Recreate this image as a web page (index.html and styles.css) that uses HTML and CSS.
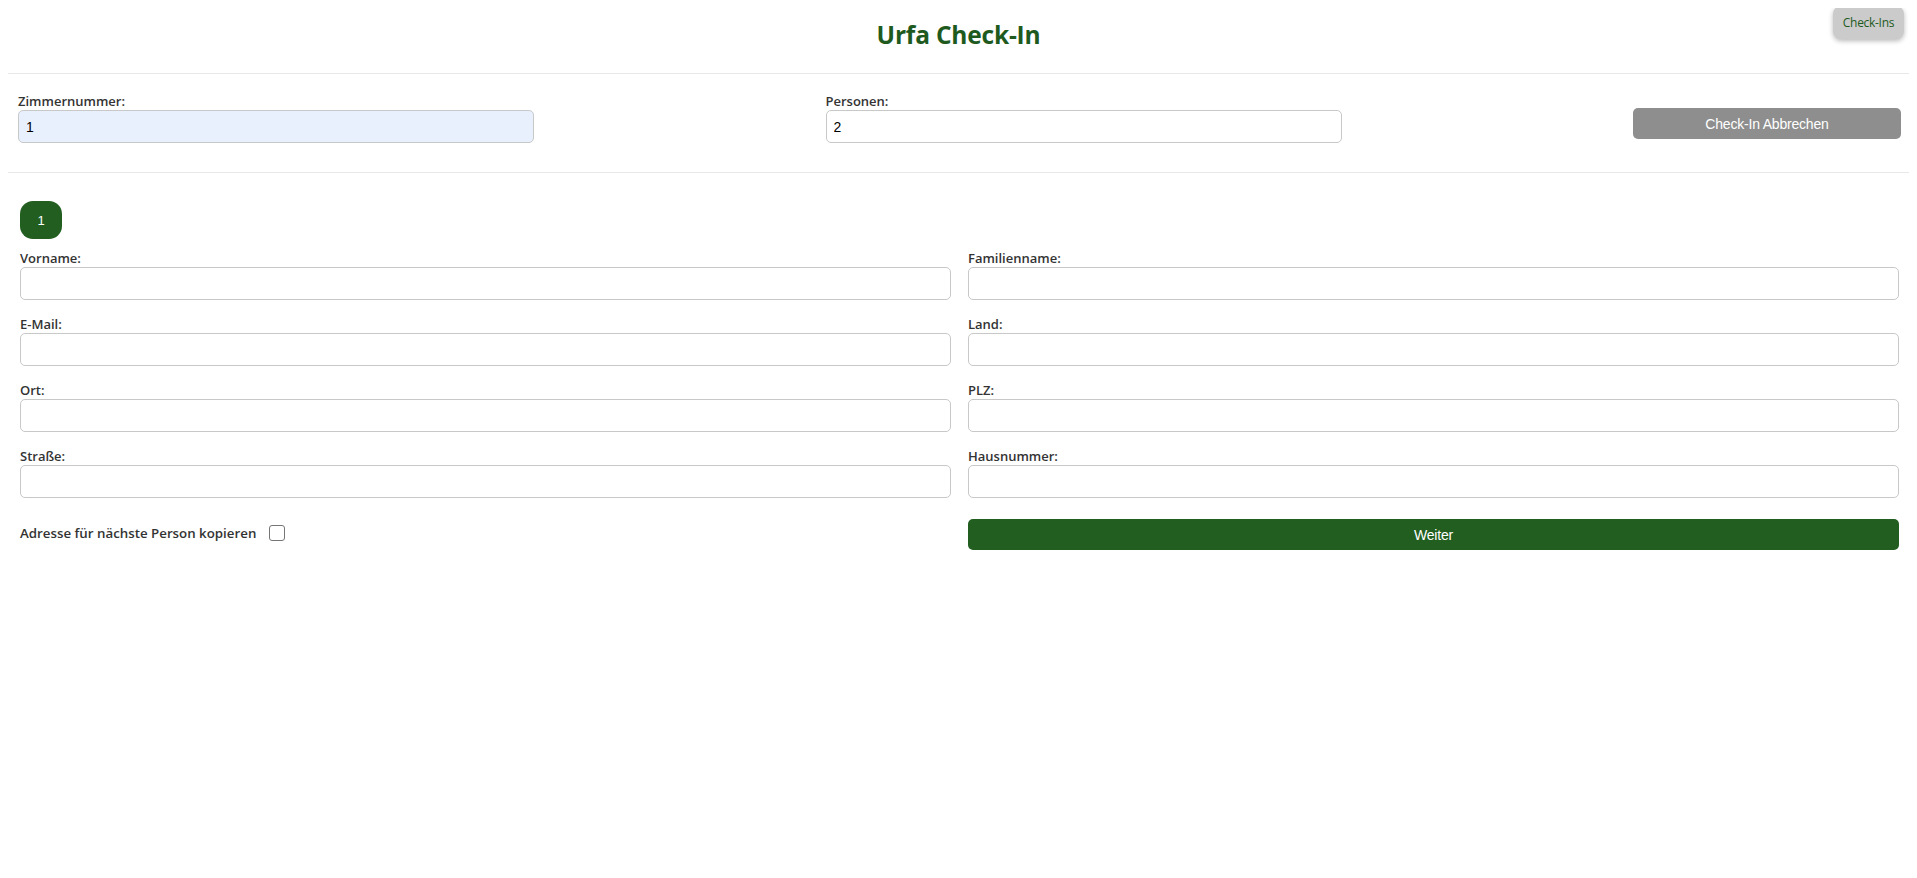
FILE: index.html
```html
<!DOCTYPE html>
<html lang="de">
<head>
<meta charset="utf-8">
<title>Urfa Check-In</title>
<link rel="stylesheet" href="styles.css">
</head>
<body>
<header class="topbar">
  <h1 class="title">Urfa Check-In</h1>
  <button class="checkins-btn" type="button">Check-Ins</button>
</header>

<section class="room-row">
  <div class="field room-field">
    <label class="label" for="room">Zimmernummer:</label>
    <input class="input input-filled" id="room" type="text" value="1">
  </div>
  <div class="field room-field">
    <label class="label" for="persons">Personen:</label>
    <input class="input" id="persons" type="text" value="2">
  </div>
  <button class="cancel-btn" type="button">Check-In Abbrechen</button>
</section>

<section class="person">
  <div class="tabs">
    <span class="badge">1</span>
  </div>
  <div class="grid">
    <div class="field"><label class="label">Vorname:</label><input class="input" type="text"></div>
    <div class="field"><label class="label">Familienname:</label><input class="input" type="text"></div>
    <div class="field"><label class="label">E-Mail:</label><input class="input" type="text"></div>
    <div class="field"><label class="label">Land:</label><input class="input" type="text"></div>
    <div class="field"><label class="label">Ort:</label><input class="input" type="text"></div>
    <div class="field"><label class="label">PLZ:</label><input class="input" type="text"></div>
    <div class="field"><label class="label">Straße:</label><input class="input" type="text"></div>
    <div class="field"><label class="label">Hausnummer:</label><input class="input" type="text"></div>
    <label class="copy">
      <span>Adresse für nächste Person kopieren</span>
      <input class="check" type="checkbox">
    </label>
    <button class="next-btn" type="button">Weiter</button>
  </div>
</section>
</body>
</html>
```

FILE: styles.css
```css
* { box-sizing: border-box; }

body {
  margin: 8px;
  font-family: "Open Sans", "Noto Sans", sans-serif;
  color: #333;
  background: #fff;
}

.topbar {
  position: relative;
  height: 66px;
  display: flex;
  align-items: center;
  justify-content: center;
  border-bottom: 1px solid #e8e8e8;
}

.title {
  margin: 0;
  padding-bottom: 13px;
  font-size: 24.5px;
  font-weight: 700;
  color: #1e5a1e;
  letter-spacing: -0.2px;
}

.checkins-btn {
  position: absolute;
  top: -2px;
  right: 5px;
  width: 71px;
  height: 33px;
  padding: 0;
  border: none;
  border-radius: 8px;
  background: #cbcbcb;
  color: #1e5a1e;
  font-family: "Open Sans", sans-serif;
  font-size: 12px;
  letter-spacing: -0.3px;
  box-shadow: 0 2px 5px rgba(0, 0, 0, 0.28);
}

.room-row {
  display: flex;
  justify-content: space-between;
  align-items: flex-start;
  padding: 19px 8px 29px 10px;
  border-bottom: 1px solid #e8e8e8;
}

.room-field { width: 516px; }

.field {
  display: flex;
  flex-direction: column;
}

.label {
  display: block;
  font-size: 13px;
  line-height: 17px;
  font-weight: 600;
  color: #333;
}

.input {
  height: 33px;
  width: 100%;
  padding: 0 7px;
  border: 1px solid #c8c8c8;
  border-radius: 5px;
  font-family: "Liberation Sans", Arial, sans-serif;
  font-size: 14px;
  color: #000;
  background: #fff;
}

.input-filled { background: #e8f0fe; }

.cancel-btn {
  margin-top: 15px;
  width: 268px;
  height: 31px;
  border: none;
  border-radius: 5px;
  background: #8e8e8e;
  color: #fff;
  font-family: "Liberation Sans", Arial, sans-serif;
  font-size: 14px;
  letter-spacing: -0.2px;
}

.person {
  padding: 28px 10px 0 12px;
}

.tabs {
  display: flex;
  gap: 8px;
  margin-bottom: 11px;
}

.badge {
  display: flex;
  align-items: center;
  justify-content: center;
  width: 42px;
  height: 38px;
  border-radius: 13px;
  background: #215e1f;
  color: #fff;
  font-family: "Liberation Sans", Arial, sans-serif;
  font-size: 13px;
}

.grid {
  display: grid;
  grid-template-columns: 1fr 1fr;
  column-gap: 17px;
  row-gap: 16px;
}

.copy {
  display: flex;
  align-items: center;
  gap: 13px;
  font-size: 13.3px;
  font-weight: 600;
  color: #333;
  padding-top: 2px;
}

.check {
  margin: 0;
  width: 16px;
  height: 16px;
  appearance: none;
  border: 1px solid #767676;
  border-radius: 3px;
  background: #fff;
}

.next-btn {
  margin-top: 5px;
  height: 31px;
  border: none;
  border-radius: 5px;
  background: #215e1f;
  color: #fff;
  font-family: "Liberation Sans", Arial, sans-serif;
  font-size: 14px;
  letter-spacing: -0.2px;
}
```
